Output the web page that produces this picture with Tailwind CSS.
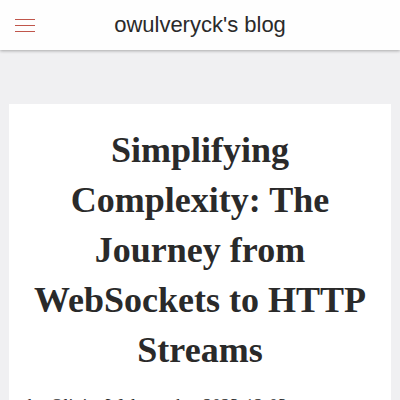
<!DOCTYPE html>
<html lang="en">
<head>
<meta charset="utf-8">
<meta name="viewport" content="width=device-width, initial-scale=1">
<title>owulveryck's blog</title>
<script src="https://cdn.jsdelivr.net/npm/@tailwindcss/browser@4"></script>
</head>
<body class="h-screen overflow-hidden bg-[#f0f0f2] text-[#2a2a2a]">
<header class="relative grid h-[50px] grid-cols-[50px_1fr_50px] items-center bg-[#fefefe] shadow-[0_1px_3px_rgba(0,0,0,0.3)]">
<button type="button" aria-label="Menu" class="flex h-full items-center justify-center text-[#c0564b]">
<svg class="h-4 w-5" viewBox="0 0 20 16" fill="currentColor" aria-hidden="true"><path d="M0 2h20v1H0zM0 8h20v1H0zM0 14h20v1H0z"/></svg>
</button>
<a href="#" class="text-center font-['Liberation_Sans',Arial,sans-serif] text-[22px] leading-[30px]">owulveryck's blog</a>
</header>
<main class="px-[9px] pt-[54px] font-['Liberation_Serif','Times_New_Roman',serif]">
<article class="bg-white px-[19px] pt-[21px] pb-10">
<h1 class="text-center text-[36px] leading-[50px] font-bold">Simplifying Complexity: The Journey from WebSockets to HTTP Streams</h1>
<p class="mt-[19px] text-[18px] leading-[25px] whitespace-nowrap">by Olivier Wulveryck – 2023-12-03</p>
</article>
</main>
</body>
</html>
